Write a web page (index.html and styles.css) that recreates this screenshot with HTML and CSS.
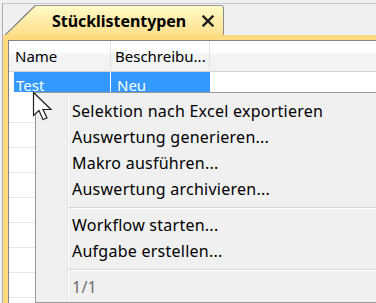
FILE: index.html
```html
<!DOCTYPE html>
<html>
<head>
<meta charset="utf-8">
<link rel="stylesheet" href="styles.css">
</head>
<body>
<div class="screen">
  <div class="frame">
    <div class="tabstrip">
      <div class="tab">
        <div class="tab-slant"></div>
        <div class="tab-body">
          <span class="tab-title">Stücklistentypen</span>
          <svg class="tab-close" width="12" height="12" viewBox="0 0 12 12"><path d="M1.5 1.5 L10.5 10.5 M10.5 1.5 L1.5 10.5" stroke="#1a1a1a" stroke-width="2.3" stroke-linecap="square"/></svg>
        </div>
      </div>
    </div>
    <div class="panel">
      <div class="grid">
        <div class="header">
          <div class="hcell c1">Name</div>
          <div class="hcell c2">Beschreibu...</div>
          <div class="hrest"></div>
        </div>
        <div class="row selected">
          <div class="cell c1">Test</div>
          <div class="cell c2">Neu</div>
        </div>
        <div class="blank first"></div>
        <div class="blank"></div>
        <div class="blank"></div>
        <div class="blank"></div>
        <div class="blank"></div>
        <div class="blank"></div>
        <div class="blank"></div>
        <div class="blank"></div>
      </div>
    </div>
  </div>

  <div class="menu">
    <div class="item">Selektion nach Excel exportieren</div>
    <div class="item">Auswertung generieren...</div>
    <div class="item">Makro ausführen...</div>
    <div class="item">Auswertung archivieren...</div>
    <div class="sep"></div>
    <div class="item">Workflow starten...</div>
    <div class="item">Aufgabe erstellen...</div>
    <div class="sep"></div>
    <div class="item disabled">1/1</div>
  </div>

  <svg class="cursor" width="22" height="30" viewBox="0 0 22 30"><path d="M1.5 1.5 L1.5 24.5 L7 19.5 L11 28.5 L15 27 L11 18.5 L19 18.5 Z" fill="#fff" stroke="#1e1e1e" stroke-width="1.2" stroke-linejoin="miter"/></svg>
</div>
</body>
</html>
```

FILE: styles.css
```css
html, body {
  margin: 0;
  padding: 0;
}
body {
  width: 376px;
  height: 303px;
  overflow: hidden;
  background: #f0f0f0;
  font-family: "Noto Sans", "Open Sans", sans-serif;
  font-size: 15px;
  color: #000;
}
.screen {
  position: relative;
  width: 376px;
  height: 303px;
  overflow: hidden;
  padding-top: 3px;
  box-sizing: border-box;
}
.frame {
  margin-left: 2px;
  border-top: 1px solid #c8c8d0;
  border-left: 1px solid #a8a8be;
  height: 299px;
  display: flex;
  flex-direction: column;
}
.tabstrip {
  height: 31px;
  flex: none;
  display: flex;
  align-items: flex-end;
}
.tab {
  margin-left: 2px;
  height: 30px;
  display: flex;
}
.tab-slant {
  width: 31px;
  height: 30px;
  background:
    linear-gradient(to bottom right, #f0f0f0 calc(50% - 0.9px), #8a8a8a calc(50% - 0.5px), #8a8a8a calc(50% + 0.4px), transparent calc(50% + 0.9px)),
    linear-gradient(to bottom, #fffbc6, #ffdf8c);
}
.tab-body {
  width: 171px;
  height: 29px;
  border-top: 1px solid #9c9c9c;
  border-right: 1px solid #8a8a8a;
  border-top-right-radius: 3px;
  background: linear-gradient(to bottom, #fffbc6, #ffdf8c);
  display: flex;
  align-items: center;
  padding-left: 16px;
  box-sizing: content-box;
}
.tab-title {
  font-weight: bold;
  font-size: 16px;
  width: 150px;
  padding-top: 1px;
  letter-spacing: -0.05px;
  white-space: nowrap;
}
.tab-close {
  margin-top: 1px;
}
.panel {
  flex: 1;
  background: #ffda7e;
  padding: 5px 0 0 5px;
  display: flex;
}
.grid {
  flex: 1;
  border-top: 1px solid #848484;
  border-left: 1px solid #848484;
  background: #fff;
  overflow: hidden;
}
.header {
  display: flex;
  height: 30px;
  border-bottom: 1px solid #d5d5d5;
  background: linear-gradient(to bottom, #ffffff 0%, #ffffff 35%, #f3f4f6 45%, #f1f2f4 100%);
}
.hcell {
  line-height: 30px;
  border-right: 1px solid #e2e2e2;
  white-space: nowrap;
}
.hcell.c1 {
  width: 95px;
  padding-left: 6px;
}
.hcell.c2 {
  width: 94px;
  padding-left: 4px;
}
.hrest {
  flex: 1;
}
.row {
  display: flex;
  height: 24px;
  padding-left: 5px;
}
.cell {
  height: 24px;
  line-height: 20px;
  padding-top: 3px;
  box-sizing: border-box;
  white-space: nowrap;
}
.selected .cell {
  background: linear-gradient(#3399ff, #3399ff) top left / 100% 20px no-repeat;
  color: #fff;
}
.cell.c1 {
  width: 96px;
  padding-left: 2px;
  margin-right: 1px;
}
.cell.c2 {
  width: 99px;
  padding-left: 6px;
}
.blank {
  height: 24px;
  border-bottom: 1px solid #e6e6e6;
}
.blank.first {
  height: 26px;
}
.menu {
  position: absolute;
  left: 35px;
  top: 92px;
  width: 360px;
  height: 204px;
  border: 1px solid #979797;
  background:
    linear-gradient(to right, transparent 31px, #e2e3e3 31px, #e2e3e3 32px, #ffffff 32px, #ffffff 33px, transparent 33px),
    #f0f0f0;
  padding-top: 5px;
  font-size: 16px;
  letter-spacing: 0.25px;
}
.item {
  height: 26px;
  line-height: 26px;
  padding-left: 36px;
  white-space: nowrap;
}
.item.disabled {
  color: #6d6d6d;
}
.sep {
  height: 10px;
  margin-left: 32px;
  box-sizing: border-box;
  padding-top: 5px;
}
.sep::before {
  content: "";
  display: block;
  height: 1px;
  background: #d7d7d7;
  border-bottom: 1px solid #ffffff;
}
.cursor {
  position: absolute;
  left: 32px;
  top: 91px;
}
```
